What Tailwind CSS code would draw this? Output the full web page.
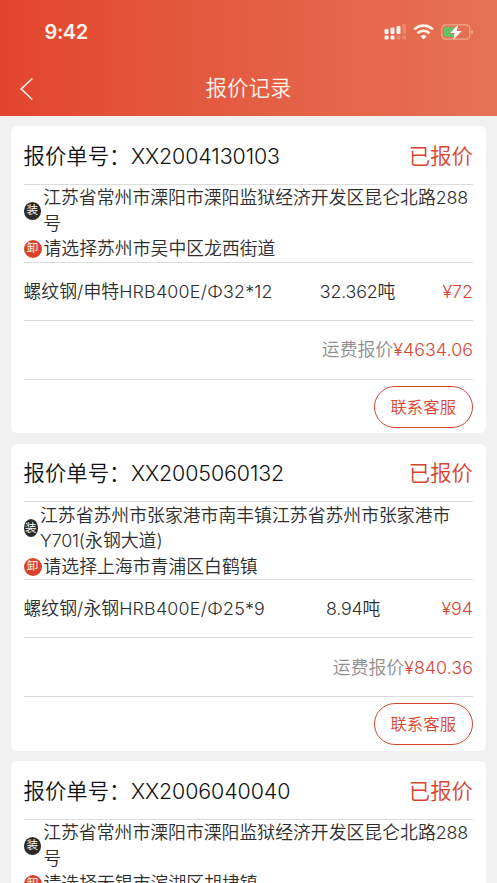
<!DOCTYPE html>
<html lang="zh-CN">
<head>
<meta charset="utf-8">
<meta name="viewport" content="width=device-width, initial-scale=1">
<title>报价记录</title>
<script src="https://cdn.jsdelivr.net/npm/@tailwindcss/browser@4"></script>
</head>
<body class="h-[883px] overflow-hidden bg-[#f1f1f1] font-['Inter','Noto_Sans_CJK_SC',sans-serif] font-[350] text-[#2e2e2e]">
<header class="flex h-[116px] flex-col bg-linear-to-r from-[#e2452d] to-[#e57256] text-[#fff3ec]">
  <div class="flex h-[62px] items-center justify-between pt-[2px] pr-[24px] pl-[44.500px]">
    <span class="text-[20px] font-semibold leading-none tracking-[-0.4px]">9:42</span>
    <div class="flex items-center gap-[7px]">
      <svg class="h-[18px] w-[22px]" viewBox="0 0 22 18" fill="currentColor">
        <rect x="0.500" y="6" width="4" height="5" rx="1"/><rect x="6.500" y="4.5" width="4" height="6.5" rx="1"/><rect x="12.500" y="3" width="4" height="8" rx="1"/><rect x="18.300" y="1" width="3.700" height="10" rx="1" opacity=".2"/>
        <rect x="0.500" y="12.5" width="4" height="4" rx="1.3"/><rect x="6.500" y="12.5" width="4" height="4" rx="1.3"/><rect x="12.500" y="12.5" width="4" height="4" rx="1.3" opacity=".2"/><rect x="18.300" y="12.5" width="3.700" height="4" rx="1.3" opacity=".2"/>
      </svg>
      <svg class="h-[16px] w-[21px]" viewBox="0 0 21 16" fill="none" stroke="currentColor" stroke-width="2.7">
        <path d="M1.2 5.4a13.2 13.2 0 0 1 18.6 0"/><path d="M4.6 9.2a8.300 8.300 0 0 1 11.8 0"/><path d="M7.4 12.2a4.400 4.400 0 0 1 6.200 0L10.500 15.500Z" fill="currentColor" stroke="none"/>
      </svg>
      <svg class="h-[18px] w-[32px]" viewBox="0 0 32 18">
        <rect x=".8" y="1.8" width="28" height="14.4" rx="4" fill="none" stroke="#f6b79f" stroke-opacity=".8" stroke-width="1.2"/>
        <path d="M30.5 6.5v5c1.7-.7 1.7-4.300 0-5Z" fill="#f6b79f"/>
        <path d="M5 4h8v10H5a2.200 2.200 0 0 1-2.200-2.200V6.200A2.200 2.200 0 0 1 5 4Z" fill="#62c263"/>
        <path d="M17.600 1 9.200 10h4.600l-1.900 7.200L20.800 7.900h-5Z" fill="#fff" stroke="#e46b4f" stroke-width="1" paint-order="stroke"/>
      </svg>
    </div>
  </div>
  <div class="grid h-[54px] grid-cols-[1fr_auto_1fr] items-center pl-[20px] pr-[20px]">
    <svg class="h-[24px] w-[14px]" viewBox="0 0 14 24" fill="none" stroke="currentColor" stroke-width="1.600"><path d="M12.300 1.500 1.200 12l11.100 10.500"/></svg>
    <h1 class="-mt-[2px] text-[21.500px] leading-[28px]">报价记录</h1>
    <span></span>
  </div>
</header>
<main id="list" class="flex flex-col gap-[10.400px] px-[11px] pt-[10.400px]"></main>
<script>
const orders = [
  { no: 'XX2004130103', from: '江苏省常州市溧阳市溧阳监狱经济开发区昆仑北路288号', to: '请选择苏州市吴中区龙西街道', goods: '螺纹钢/申特HRB400E/Φ32*12', qty: '32.362', price: '72', total: '4634.06' },
  { no: 'XX2005060132', from: '江苏省苏州市张家港市南丰镇江苏省苏州市张家港市Y701(永钢大道)', to: '请选择上海市青浦区白鹤镇', goods: '螺纹钢/永钢HRB400E/Φ25*9', qty: '8.94', price: '94', total: '840.36', narrow: true },
  { no: 'XX2006040040', from: '江苏省常州市溧阳市溧阳监狱经济开发区昆仑北路288号', to: '请选择无锡市滨湖区胡埭镇', goods: '螺纹钢/永钢HRB400E/Φ25*9', qty: '8.94', price: '94', total: '840.36' },
];
const latin = t => t.replace(/[A-Za-z0-9.*¥Φ]+/g, '<span class="tracking-[-0.2px]">$&</span>');
const wide = t => t.replace(/[A-Za-z0-9.*Φ/]+/g, '<span class="tracking-[0.22px]">$&</span>');
document.getElementById('list').innerHTML = orders.map(o => `
<article class="flex h-[307px] shrink-0 flex-col rounded-[6px] bg-white pr-[13px] pl-[12.500px] text-[17.850px]">
  <div class="flex h-[58.400px] shrink-0 items-center justify-between border-b border-[#dcdcdc] pt-[1.500px] text-[21.400px] text-[#111]">
    <div class="flex items-center"><span>报价单号：</span><span class="ml-[0.500px] tracking-[-0.100px]">${o.no}</span></div>
    <span class="text-[#d8452f]">已报价</span>
  </div>
  <div class="flex h-[77.800px] shrink-0 flex-col border-b border-[#dcdcdc] pt-[0.700px] leading-[25.500px]">
    <div class="flex items-center">
      <span class="${o.narrow ? 'mr-[2px] w-[14.500px]' : 'mr-[2.200px] w-[17.500px]'} flex h-[18px] shrink-0 items-center justify-center rounded-[50%] bg-[#2b2b2b] text-[11.500px] leading-none text-white">装</span>
      <p class="min-w-0 flex-1">${latin(o.from)}</p>
    </div>
    <div class="flex items-center">
      <span class="mr-[2px] flex size-[18px] shrink-0 items-center justify-center rounded-full bg-[#d8432e] text-[11.500px] leading-none text-white">卸</span>
      <p>${o.to}</p>
    </div>
  </div>
  <div class="flex h-[58.500px] shrink-0 items-center justify-between border-b border-[#dcdcdc] pt-[2px]">
    <span class="whitespace-nowrap">${wide(o.goods)}</span>
    <span>${latin(o.qty)}吨</span>
    <span class="text-[#d8452f]">${'¥' + o.price}</span>
  </div>
  <div class="flex h-[58.500px] shrink-0 items-center justify-end border-b border-[#dcdcdc] pt-[2px]">
    <span class="text-[#8e8e8e]">运费报价</span><span class="tracking-[0.05px] text-[#d8452f]">¥${o.total}</span>
  </div>
  <div class="flex flex-1 items-center justify-end pt-[1px]">
    <button class="h-[42px] w-[99.500px] rounded-full border-[1.500px] border-[#d8452f] text-[16.400px] text-[#d8452f]">联系客服</button>
  </div>
</article>`).join('');
</script>
</body>
</html>
